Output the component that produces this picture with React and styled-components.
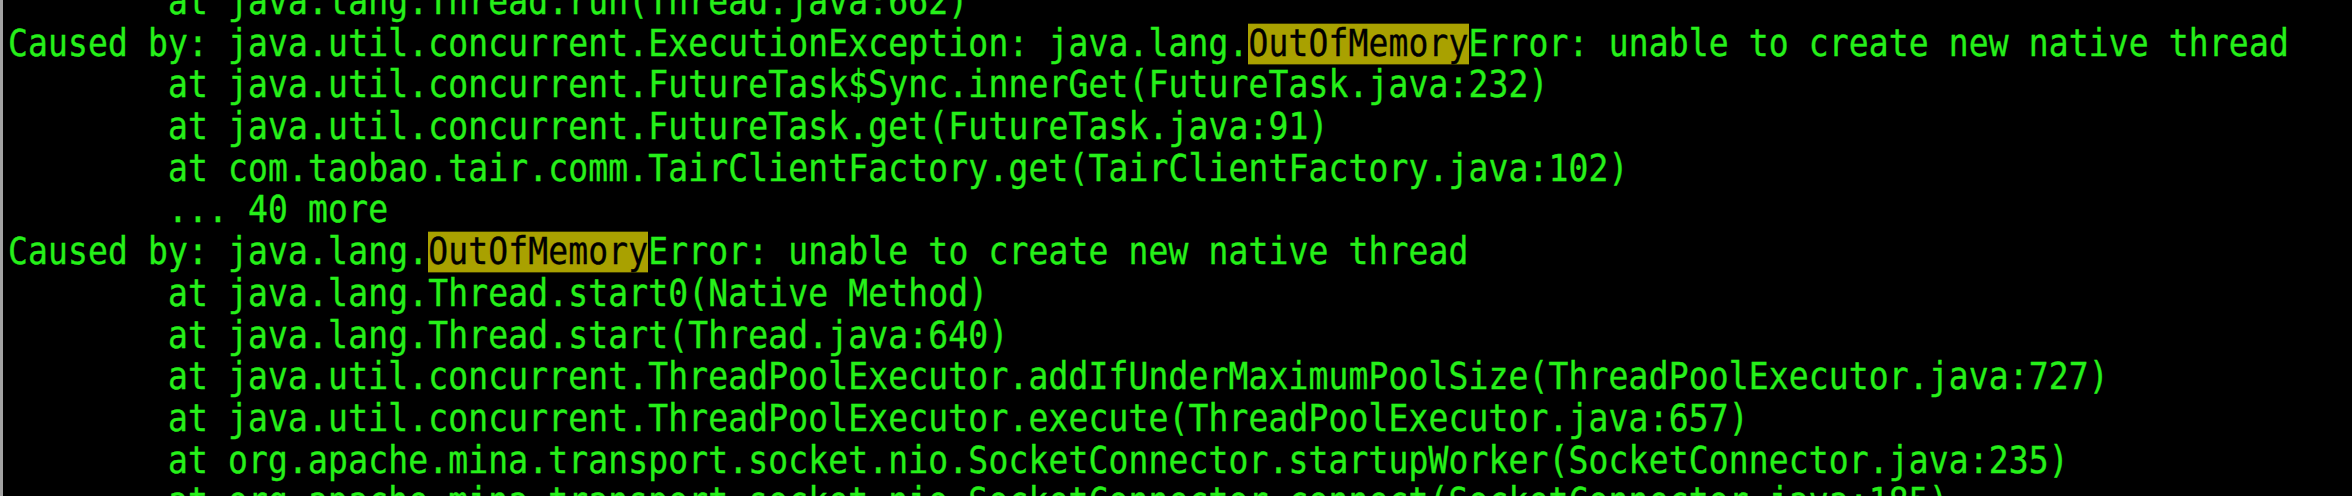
import React from "react";
import styled, { createGlobalStyle } from "styled-components";

const Global = createGlobalStyle`
  html, body { margin: 0; padding: 0; background: #000; }
  body { overflow: hidden; }
`;

const Terminal = styled.div`
  height: 496px;
  background: #000;
  border-left: 3px solid #a3a3a3;
  padding-left: 5px;
  overflow: hidden;
  box-sizing: border-box;
`;

const Output = styled.div`
  margin-top: -19px;
  font-family: "DejaVu Sans Mono", "Liberation Mono", monospace;
  font-size: 33px;
  letter-spacing: 0.14px;
  color: #26f01a;
  white-space: pre;
  -webkit-text-stroke: 0.3px #26f01a;
`;

const Line = styled.div`
  height: 41.7px;
  line-height: 41.7px;
  transform: scaleY(1.13);
  transform-origin: center;
`;

const Match = styled.span`
  display: inline-block;
  background: #a9a100;
  color: #000;
  -webkit-text-stroke: 0.3px #000;
  line-height: 36px;
`;

const T = "        ";

function render(text) {
  const key = "OutOfMemory";
  const i = text.indexOf(key);
  if (i < 0) return text;
  return (
    <>
      {text.slice(0, i)}
      <Match>{key}</Match>
      {text.slice(i + key.length)}
    </>
  );
}

const lines = [
  `${T}at java.lang.Thread.run(Thread.java:662)`,
  "Caused by: java.util.concurrent.ExecutionException: java.lang.OutOfMemoryError: unable to create new native thread",
  `${T}at java.util.concurrent.FutureTask$Sync.innerGet(FutureTask.java:232)`,
  `${T}at java.util.concurrent.FutureTask.get(FutureTask.java:91)`,
  `${T}at com.taobao.tair.comm.TairClientFactory.get(TairClientFactory.java:102)`,
  `${T}... 40 more`,
  "Caused by: java.lang.OutOfMemoryError: unable to create new native thread",
  `${T}at java.lang.Thread.start0(Native Method)`,
  `${T}at java.lang.Thread.start(Thread.java:640)`,
  `${T}at java.util.concurrent.ThreadPoolExecutor.addIfUnderMaximumPoolSize(ThreadPoolExecutor.java:727)`,
  `${T}at java.util.concurrent.ThreadPoolExecutor.execute(ThreadPoolExecutor.java:657)`,
  `${T}at org.apache.mina.transport.socket.nio.SocketConnector.startupWorker(SocketConnector.java:235)`,
  `${T}at org.apache.mina.transport.socket.nio.SocketConnector.connect(SocketConnector.java:185)`,
];

export default function App() {
  return (
    <>
      <Global />
      <Terminal>
        <Output>
          {lines.map((l, idx) => (
            <Line key={idx}>{render(l)}</Line>
          ))}
        </Output>
      </Terminal>
    </>
  );
}
